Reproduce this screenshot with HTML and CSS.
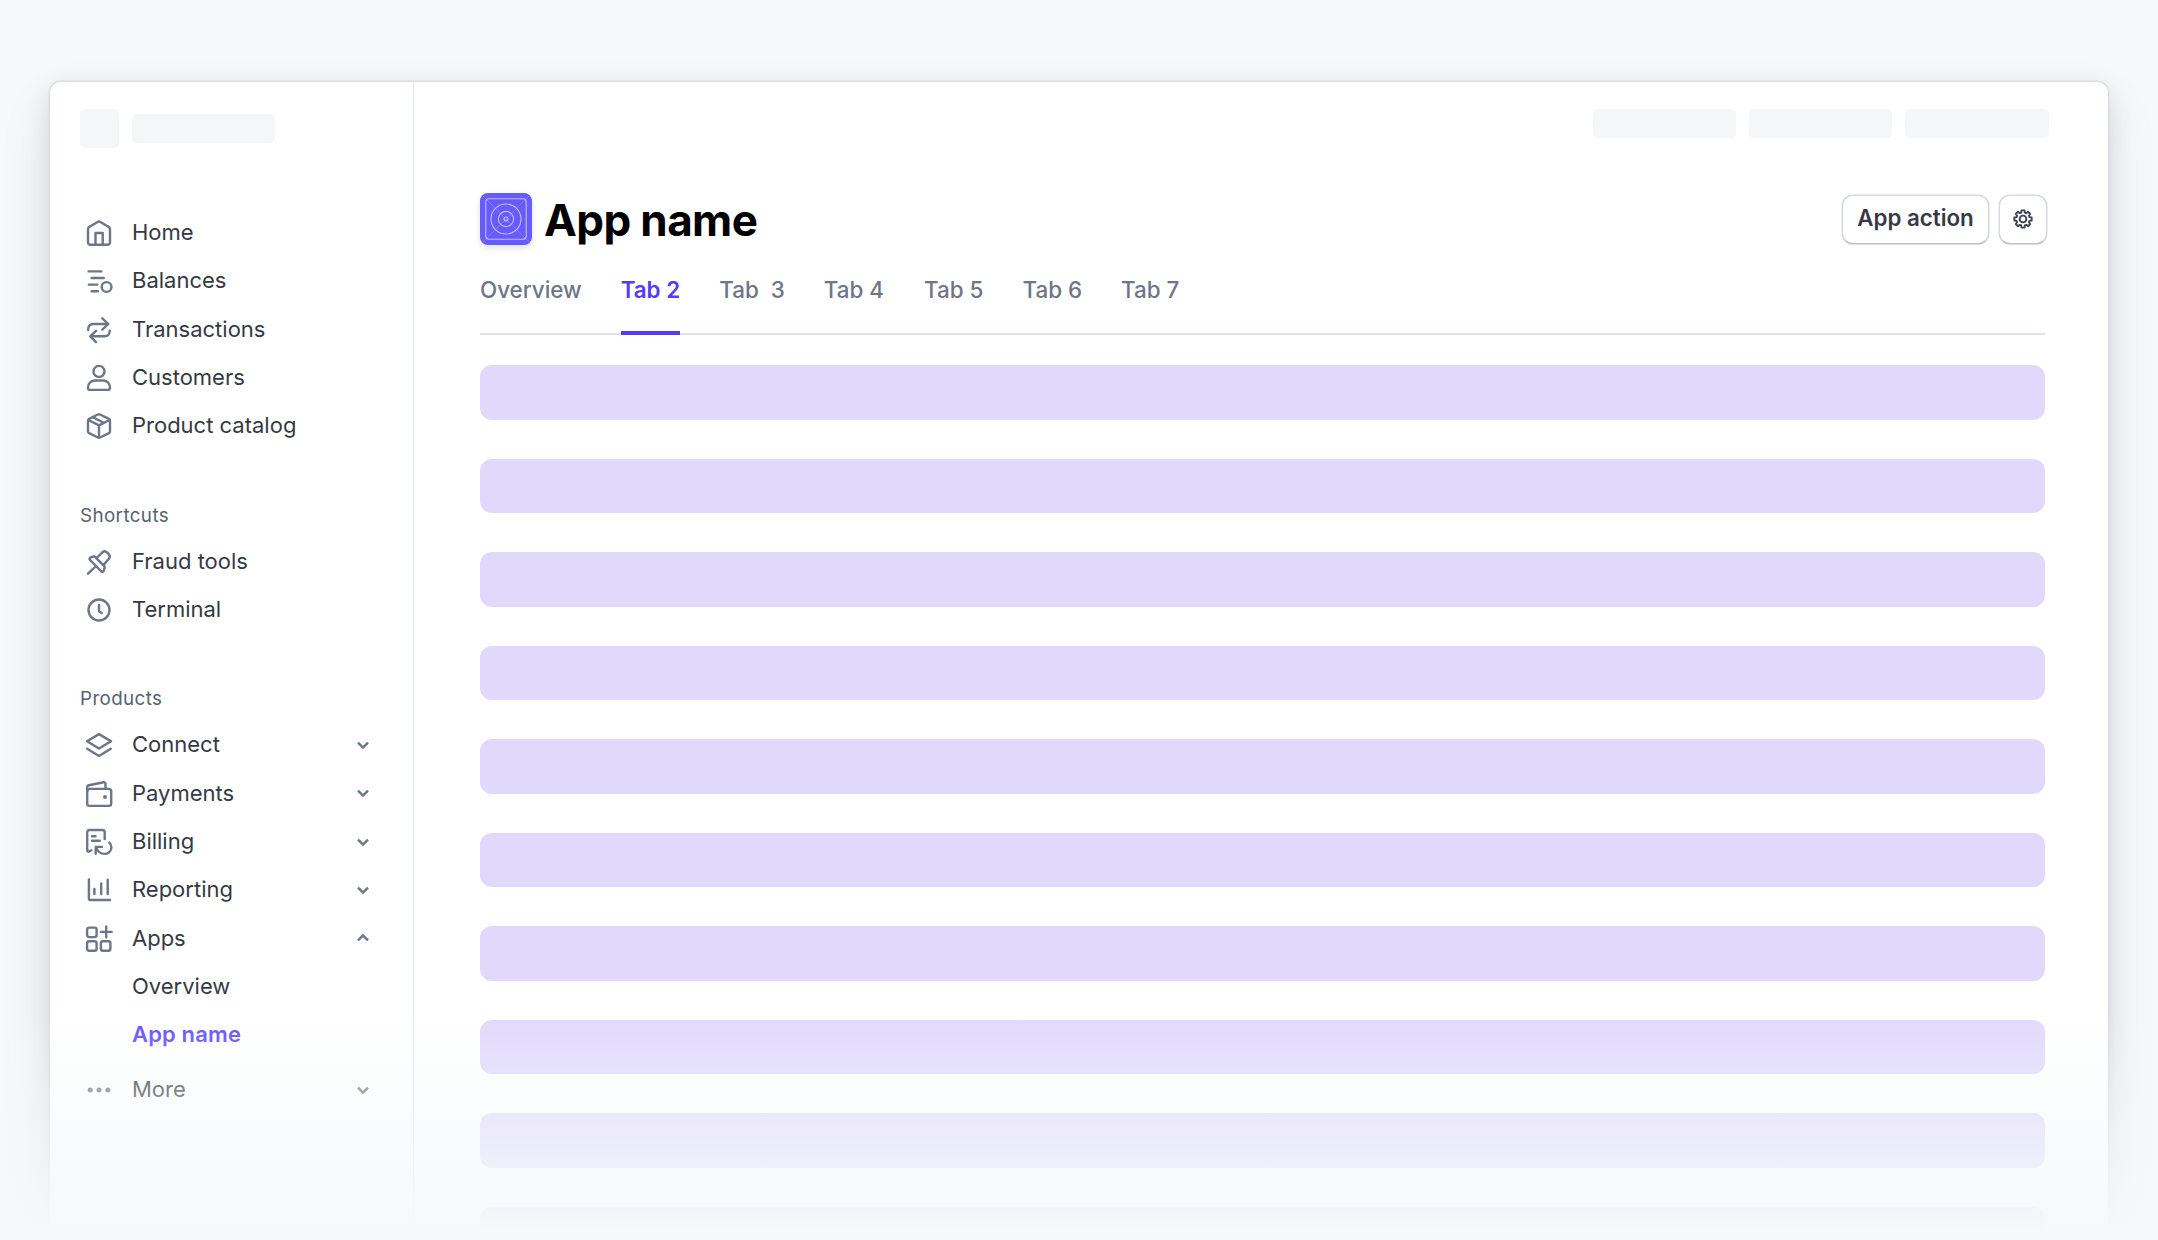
FILE: index.html
```html
<!DOCTYPE html>
<html lang="en">
<head>
<meta charset="utf-8">
<title>App name</title>
<link rel="stylesheet" href="styles.css">
</head>
<body>
<div class="window">
  <aside class="sidebar">
    <div class="account"><span class="account-logo"></span><span class="account-name"></span></div>
    <nav class="nav">
      <a class="item"><svg class="icon" viewBox="0 0 28 28"><path d="M3 10.2c0-.9.4-1.6 1.2-2.1l8.4-5.2c.9-.6 1.9-.6 2.8 0l8.4 5.2c.8.5 1.2 1.2 1.2 2.1v13.3a2.3 2.3 0 0 1-2.3 2.3H5.3A2.3 2.3 0 0 1 3 23.5ZM10.5 25.5V14h7.2v11.5"/></svg>Home</a>
      <a class="item"><svg class="icon" viewBox="0 0 28 28"><path d="M3.6 4.4H16.4M6.6 11H18.8M3.8 17.6H12.4M6.6 24.2H13"/><circle cx="21.6" cy="20" r="4.9"/></svg>Balances</a>
      <a class="item"><svg class="icon" viewBox="0 0 28 28"><path d="M3.2 14v-1c0-3 2-5 5-5h15M17.3 2.3l6 5.7-6 5.7M24.8 14.6c0 3.3-2 5.7-5 5.7H5.3M11 14.8l-5.8 5.5 5.8 5.9"/></svg>Transactions</a>
      <a class="item"><svg class="icon" viewBox="0 0 28 28"><circle cx="14" cy="7.4" r="5.5"/><path d="M3 23.4c0-3.9 3-6.9 7-6.9h8c4 0 7 3 7 6.9v.7c0 1.1-.7 1.8-1.8 1.8H4.8C3.7 25.9 3 25.2 3 24.1Z"/></svg>Customers</a>
      <a class="item"><svg class="icon" viewBox="0 0 28 28"><path d="M12.9 2.5 4.1 6.9C3.4 7.3 3 8 3 8.7v10.6c0 .8.4 1.4 1.1 1.8l8.8 4.4c.7.4 1.5.4 2.2 0l8.8-4.4c.7-.4 1.1-1 1.1-1.8V8.7c0-.7-.4-1.4-1.1-1.8l-8.8-4.4c-.7-.4-1.5-.4-2.2 0ZM3.4 8 14 13.4 24.6 8M14 13.4V25.6M8.2 5.500l10.600 5.300"/></svg>Product catalog</a>

      <h2 class="section">Shortcuts</h2>
      <a class="item"><svg class="icon" viewBox="0 0 28 28"><path d="M3 25.7l8-7.7M5.1 12c-1-1-.6-2.2.6-2.6l2.500-.9c.7-.2 1.300-.1 1.800.4l9.200 9.300c.5.5.6 1.100.4 1.800l-.9 2.700c-.4 1.200-1.500 1.500-2.400.6ZM11.700 10l5.600-5.700c1.400-1.300 3.300-1.300 4.700.1l1.800 1.800c1.300 1.400 1.300 3.100.1 4.500l-5.100 5.900"/></svg>Fraud tools</a>
      <a class="item"><svg class="icon" viewBox="0 0 28 28"><circle cx="14" cy="14" r="10.5"/><path d="M14 9v6.200l2.700 1.900"/></svg>Terminal</a>

      <h2 class="section">Products</h2>
      <a class="item"><svg class="icon" viewBox="0 0 28 28"><path d="M14 3.1l12 7.200-12 7.200-12-7.200ZM2.200 17.700 14 24.900l11.800-7.200"/></svg>Connect<svg class="chevron" viewBox="0 0 16 16"><path d="M3 5.700l5 4.900 5-4.900"/></svg></a>
      <a class="item"><svg class="icon" viewBox="0 0 28 28"><rect x="2.2" y="8.9" width="24" height="17" rx="2.4"/><path d="M2.200 11.500V7.400c0-1.100.7-1.900 1.700-2.100l14.700-3c1.100-.2 1.900.5 1.900 1.500v5"/><circle class="dot" cx="20" cy="17.1" r="2"/></svg>Payments<svg class="chevron" viewBox="0 0 16 16"><path d="M3 5.700l5 4.900 5-4.900"/></svg></a>
      <a class="item"><svg class="icon" viewBox="0 0 28 28"><path d="M19.700 11V4.300A2.300 2.300 0 0 0 17.400 2H4.500a2.300 2.300 0 0 0-2.300 2.300v18.200c0 1 1 1.500 1.800 1l2.300-1.300M7 8.300h3.500M7 12.700h7.700M17 18.900h-6.300v6.800M11.400 19.500c1.300 4 4.400 6.400 8 6.400 4 0 7-2.800 7-6.400 0-2-.7-3.600-2-4.900"/></svg>Billing<svg class="chevron" viewBox="0 0 16 16"><path d="M3 5.700l5 4.900 5-4.900"/></svg></a>
      <a class="item"><svg class="icon" viewBox="0 0 28 28"><path d="M3.900 3.400V22.400a1.600 1.600 0 0 0 1.600 1.600H25M9.400 12.900V18M16.200 7.500V18M22.700 3.700V18"/></svg>Reporting<svg class="chevron" viewBox="0 0 16 16"><path d="M3 5.700l5 4.900 5-4.900"/></svg></a>
      <a class="item"><svg class="icon" viewBox="0 0 28 28"><rect x="2.1" y="2.6" width="9.5" height="9.5" rx="2"/><rect x="2.1" y="16.2" width="9.5" height="9.5" rx="2"/><rect x="15.9" y="16.2" width="9.5" height="9.5" rx="2"/><path d="M21.200 1.500v10.800M15.800 6.900h10.800"/></svg>Apps<svg class="chevron" viewBox="0 0 16 16"><path d="M3 10.300l5-4.900 5 4.900"/></svg></a>
      <a class="item sub">Overview</a>
      <a class="item sub current">App name</a>
      <a class="item more"><svg class="icon" viewBox="0 0 28 28"><circle class="dot" cx="5.2" cy="14" r="2.5"/><circle class="dot" cx="14" cy="14" r="2.5"/><circle class="dot" cx="22.9" cy="14" r="2.5"/></svg>More<svg class="chevron" viewBox="0 0 16 16"><path d="M3 5.700l5 4.900 5-4.900"/></svg></a>
    </nav>
  </aside>

  <main class="main">
    <div class="toolbar"><span></span><span></span><span></span></div>
    <header class="header">
      <svg class="app-icon" viewBox="0 0 52 52">
        <path class="faint" d="M2 2l48 48M50 2 2 50"/>
        <rect x="5.8" y="5.8" width="40.4" height="40.4" rx="3"/>
        <circle cx="26" cy="26" r="15"/><circle cx="26" cy="26" r="7.6"/><circle cx="26" cy="26" r="2"/>
      </svg>
      <h1 class="title">App name</h1>
      <button class="button action">App action</button>
      <button class="button settings" aria-label="Settings"><svg class="gear" viewBox="-12 -12 24 24"><path d="M8.67-1.53V1.53L6.44 1.85 5.86 3.25 7.21 5.05 5.05 7.21 3.25 5.86 1.85 6.44 1.53 8.67H-1.53L-1.85 6.44-3.25 5.86-5.05 7.21-7.21 5.05-5.86 3.25-6.44 1.85-8.67 1.53V-1.53L-6.44-1.85-5.86-3.25-7.21-5.05-5.05-7.21-3.25-5.86-1.85-6.44-1.53-8.67H1.53L1.85-6.44 3.25-5.86 5.05-7.21 7.21-5.05 5.86-3.25 6.44-1.85Z"/><circle r="3.4"/></svg></button>
    </header>
    <div class="tabs">
      <a class="tab">Overview</a><a class="tab active">Tab 2</a><a class="tab">Tab&nbsp; 3</a><a class="tab spaced">Tab 4</a><a class="tab">Tab 5</a><a class="tab">Tab 6</a><a class="tab">Tab 7</a>
    </div>
    <div class="rows"><div></div><div></div><div></div><div></div><div></div><div></div><div></div><div></div><div></div><div></div></div>
  </main>
</div>
<div class="fade"></div>
</body>
</html>
```
FILE: styles.css
```css
* { box-sizing: border-box; }

body {
  margin: 0;
  height: 1240px;
  padding: 81px 48px 0 49px;
  overflow: hidden;
  position: relative;
  background: #f6f8fa;
  font-family: Inter, "Liberation Sans", sans-serif;
  color: #353a44;
}

.window {
  display: flex;
  width: 2060px;
  height: 1159px;
  border: 1px solid #d8dee6;
  border-bottom: 0;
  border-radius: 12px 12px 0 0;
  background: #fff;
  box-shadow: 0 0 0 .5px #d8dee6, 0 24px 56px rgba(40, 45, 60, .08), 0 8px 26px rgba(0, 0, 0, .11);
}

.sidebar {
  width: 364px;
  padding: 27px 0 0 30px;
  border-right: 1.5px solid #e3e8ee;
}

.account { display: flex; align-items: center; gap: 13px; height: 39px; }
.account-logo { width: 39px; height: 39px; border-radius: 5px; background: #f5f6f8; }
.account-name { width: 143px; height: 29px; border-radius: 5px; background: #f5f6f8; }

.nav { padding-top: 60.4px; }

.item {
  display: flex;
  align-items: center;
  height: 48.35px;
  padding: 0 42.5px 1.2px 5.3px;
  font-size: 22px;
}

.icon {
  flex: none;
  width: 28px;
  height: 28px;
  margin: 2px 18.7px 0 0;
  fill: none;
  stroke: #6c7688;
  stroke-width: 2.4;
  stroke-linecap: round;
  stroke-linejoin: round;
}
.dot { fill: #6c7688; stroke: none; }

.chevron {
  width: 16px;
  height: 16px;
  margin: 1px 0 0 auto;
  fill: none;
  stroke: #6c7688;
  stroke-width: 2.5;
}

.section {
  margin: 54.4px 0 10.6px;
  font-size: 18.8px;
  line-height: 22px;
  font-weight: 400;
  letter-spacing: .4px;
  color: #596171;
}

.sub { padding-left: 52px; }
.current { font-weight: 600; letter-spacing: .15px; color: #5f4bff; }
.more { margin-top: 6.4px; }

.main { flex: 1; padding: 27px 63.5px 0 66px; }

.toolbar { display: flex; justify-content: flex-end; gap: 12.7px; margin-right: -4px; }
.toolbar span { width: 143.5px; height: 29px; border-radius: 5px; background: #f5f6f8; }

.header { display: flex; align-items: center; height: 52px; margin: 55px -2.5px 0 0; }

.app-icon {
  width: 52px;
  height: 52px;
  border-radius: 8px;
  background: #665bff;
  box-shadow: 0 3px 6px rgba(0, 0, 0, .12);
  fill: none;
  stroke: #c5bcff;
  stroke-width: 1.1;
}
.faint { stroke: #8a80ff; stroke-width: .8; }

.title {
  margin: 0 auto 0 12px;
  padding-top: 1px;
  font-size: 44px;
  line-height: 52px;
  font-weight: 700;
  letter-spacing: -.6px;
  color: #000;
}

.button {
  display: flex;
  align-items: center;
  justify-content: center;
  height: 49px;
  padding: 0;
  border: 1px solid #d5dbe3;
  border-bottom-color: #bfc4cb;
  border-radius: 11px;
  background: #fff;
  box-shadow: 0 1px 1px rgba(0, 0, 0, .08), 0 0 0 .5px #d5dbe3;
  font: 600 22.3px/26px Inter, "Liberation Sans", sans-serif;
  color: #353a44;
}
.action { width: 147px; margin-right: 10px; padding-bottom: 2px; }
.settings { width: 48px; }
.gear { width: 24px; height: 24px; fill: none; stroke: #3d4350; stroke-width: 1.9; stroke-linejoin: round; }

.tabs {
  display: flex;
  gap: 39px;
  height: 90px;
  padding-top: 30px;
  border-bottom: 2px solid #dfe3e9;
}
.tab {
  height: 60px;
  padding-top: 2px;
  font-size: 22.4px;
  line-height: 26px;
  font-weight: 500;
  color: #6c7688;
  white-space: pre;
}
.active { color: #533afd; font-weight: 600; border-bottom: 4px solid #533afd; }
.spaced { margin-right: 1.2px; }

.rows { display: grid; gap: 38.9px; margin-top: 30.3px; }
.rows div { height: 54.6px; border-radius: 12px; background: #e0d9fb; }

/* Fades the lower part of the window into the page background */
.fade {
  position: absolute;
  left: 0;
  right: 0;
  bottom: 0;
  height: 232px;
  background: linear-gradient(rgba(246, 248, 250, 0), #f6f8fa 96%);
}
```
